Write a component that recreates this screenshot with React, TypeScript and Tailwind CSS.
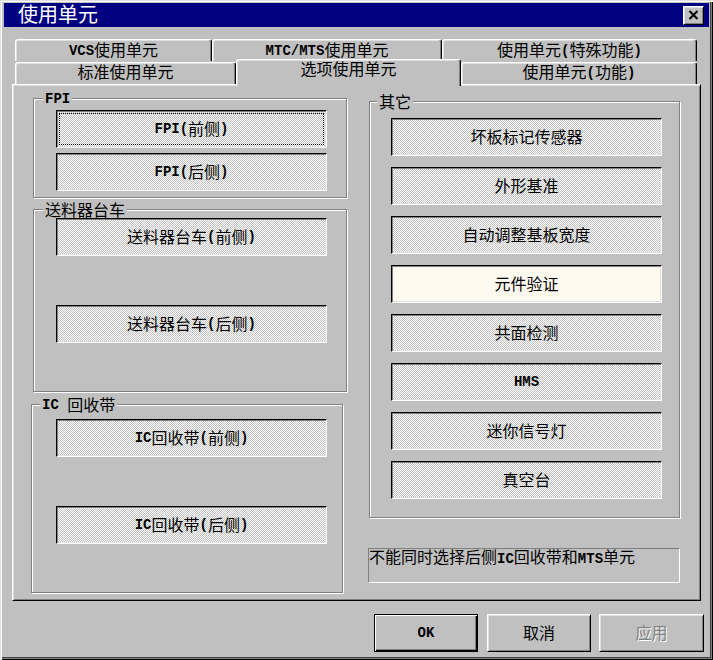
import React from "react";

const cjk = "font-['Liberation_Sans','Noto_Sans_CJK_SC',sans-serif]";

// ASCII runs get the narrow mono face, the rest stays CJK
function Label({ text }: { text: string }) {
  const parts = text.split(/([\x20-\x7e]+)/).filter(Boolean);
  return (
    <>
      {parts.map((p, i) =>
        /^[\x20-\x7e]+$/.test(p) ? (
          <span
            key={i}
            className="inline-block font-['Liberation_Mono',monospace] text-[14px] leading-[16px] font-bold whitespace-pre"
          >
            {p}
          </span>
        ) : (
          <span key={i} className="inline-block leading-[17px]">
            {p}
          </span>
        )
      )}
    </>
  );
}

function ToggleButton({
  text,
  focused,
  cream,
  className,
}: {
  text: string;
  focused?: boolean;
  cream?: boolean;
  className?: string;
}) {
  return (
    <div
      className={
        "flex h-[38px] w-[271px] items-center justify-center border border-t-black border-l-black border-r-white border-b-white shadow-[inset_1px_1px_#808080,inset_-1px_-1px_#dfdfdf] text-[16px] leading-[18px] text-black " +
        (cream
          ? "bg-[#fffaf0] "
          : "bg-[repeating-conic-gradient(#c0c0c0_0_25%,#ffffff_0_50%)] bg-[length:2px_2px] ") +
        (focused ? "outline-1 outline-dotted outline-black -outline-offset-[4px] " : "") +
        (className ?? "")
      }
    >
      <Label text={text} />
    </div>
  );
}

function Group({
  title,
  className,
  labelClass,
  children,
}: {
  title: string;
  className?: string;
  labelClass?: string;
  children: React.ReactNode;
}) {
  return (
    <div
      className={
        "border border-[#808080] shadow-[inset_1px_1px_#ffffff,1px_1px_#ffffff] " +
        (className ?? "")
      }
    >
      <div
        className={
          "-mt-[8px] flex h-[16px] w-fit items-center bg-[#c0c0c0] px-[2px] text-[16px] leading-[16px] text-black " +
          (labelClass ?? "ml-[9px]")
        }
      >
        <Label text={title} />
      </div>
      {children}
    </div>
  );
}

function BackTab({ text, w }: { text: string; w: string }) {
  return (
    <div
      className={
        "flex h-[22px] items-center justify-center rounded-t-[3px] border-t border-l border-r border-t-white border-l-white border-r-black shadow-[inset_-1px_0_#808080,inset_1px_1px_#dfdfdf] text-[16px] leading-[18px] text-black " +
        w
      }
    >
      <Label text={text} />
    </div>
  );
}

function PushButton({
  text,
  isDefault,
  disabled,
  className,
}: {
  text: string;
  isDefault?: boolean;
  disabled?: boolean;
  className?: string;
}) {
  return (
    <div
      className={
        "flex h-[38px] items-center justify-center bg-[#c0c0c0] text-[16px] leading-[18px] " +
        (isDefault
          ? "border border-black shadow-[inset_1px_1px_#ffffff,inset_-1px_-1px_#000000,inset_-2px_-2px_#808080] "
          : "border border-t-white border-l-white border-r-black border-b-black shadow-[inset_1px_1px_#dfdfdf,inset_-1px_-1px_#808080] ") +
        (disabled ? "text-[#808080] [text-shadow:1px_1px_#ffffff] " : "text-black ") +
        (className ?? "")
      }
    >
      <Label text={text} />
    </div>
  );
}

export default function App() {
  return (
    <div
      className={
        "flex h-[660px] w-[713px] flex-col bg-[#c0c0c0] px-[4px] pt-[3px] shadow-[inset_1px_1px_#dfdfdf,inset_2px_2px_#ffffff,inset_-1px_-1px_#000000,inset_-2px_-2px_#808080,inset_-3px_-3px_#404040] " +
        cjk
      }
    >
      {/* title bar */}
      <div className="flex h-[24px] items-center justify-between bg-[#000080] pl-[14px] pr-[5px]">
        <span className="inline-block text-[20px] leading-[22px] text-white">使用单元</span>
        <div className="flex h-[19px] w-[21px] items-center justify-center border border-t-white border-l-white border-r-black border-b-black bg-[#c0c0c0] shadow-[inset_1px_1px_#dfdfdf,inset_-1px_-1px_#808080]">
          <svg width="11" height="10" viewBox="0 0 11 10">
            <path d="M1.5 1 L9.5 9 M9.5 1 L1.5 9" stroke="#000" strokeWidth="2" />
          </svg>
        </div>
      </div>

      {/* tabs */}
      <div className="mt-[12px] ml-[11px] flex flex-col">
        <div className="flex h-[22px]">
          <BackTab text="VCS使用单元" w="w-[197px]" />
          <BackTab text="MTC/MTS使用单元" w="w-[230px]" />
          <BackTab text="使用单元(特殊功能)" w="w-[255px]" />
        </div>
        <div className="flex h-[23px] items-end">
          <div className="flex h-[22px] w-[221px] items-center justify-center border-t border-l border-r border-t-white border-l-white border-r-black shadow-[inset_-1px_0_#808080,inset_1px_1px_#dfdfdf] rounded-t-[3px] pb-[2px] text-[16px] leading-[18px] text-black">
            <Label text="标准使用单元" />
          </div>
          <div className="relative z-10 -mb-[2px] flex h-[27px] w-[225px] items-start justify-center rounded-t-[3px] border-t border-l border-r border-t-white border-l-white border-r-black bg-[#c0c0c0] pt-[1px] shadow-[inset_-1px_0_#808080,inset_1px_1px_#dfdfdf] text-[16px] leading-[18px] text-black">
            <Label text="选项使用单元" />
          </div>
          <div className="flex h-[22px] w-[236px] items-center justify-center border-t border-l border-r border-t-white border-l-white border-r-black shadow-[inset_-1px_0_#808080,inset_1px_1px_#dfdfdf] rounded-t-[3px] pb-[2px] text-[16px] leading-[18px] text-black">
            <Label text="使用单元(功能)" />
          </div>
        </div>
      </div>

      {/* tab page */}
      <div className="ml-[8px] flex h-[517px] w-[689px] border border-t-white border-l-white border-r-black border-b-black shadow-[inset_1px_1px_#dfdfdf,inset_-1px_-1px_#808080]">
        <div className="ml-[20px] mt-[13px] flex w-[314px] flex-col">
          <Group title="FPI" className="h-[100px]">
            <ToggleButton text="FPI(前侧)" focused className="ml-[22px] mt-[3px]" />
            <ToggleButton text="FPI(后侧)" className="ml-[22px] mt-[5px]" />
          </Group>
          <Group title="送料器台车" className="mt-[11px] h-[183px]">
            <ToggleButton text="送料器台车(前侧)" className="ml-[22px]" />
            <ToggleButton text="送料器台车(后侧)" className="ml-[22px] mt-[49px]" />
          </Group>
          <Group
            title="IC 回收带"
            labelClass="ml-[8px]"
            className="-ml-[2px] mt-[12px] h-[189px] w-[312px]"
          >
            <ToggleButton text="IC回收带(前侧)" className="ml-[24px] mt-[6px]" />
            <ToggleButton text="IC回收带(后侧)" className="ml-[24px] mt-[49px]" />
          </Group>
        </div>

        <div className="ml-[22px] mt-[16px] flex w-[311px] flex-col">
          <Group title="其它" labelClass="ml-[7px]" className="h-[417px]">
            <div className="ml-[21px] mt-[8px] flex flex-col gap-[11px]">
              <ToggleButton text="坏板标记传感器" />
              <ToggleButton text="外形基准" />
              <ToggleButton text="自动调整基板宽度" />
              <ToggleButton text="元件验证" cream />
              <ToggleButton text="共面检测" />
              <ToggleButton text="HMS" />
              <ToggleButton text="迷你信号灯" />
              <ToggleButton text="真空台" />
            </div>
          </Group>
          <div className="-ml-[1px] mt-[30px] h-[35px] w-[312px] border border-t-[#808080] border-l-[#808080] border-r-white border-b-white text-[16px] leading-[16px] text-black">
            <Label text="不能同时选择后侧IC回收带和MTS单元" />
          </div>
        </div>
      </div>

      {/* dialog buttons */}
      <div className="mt-[13px] flex">
        <PushButton text="OK" isDefault className="ml-[370px] w-[104px]" />
        <PushButton text="取消" className="ml-[9px] w-[104px]" />
        <PushButton text="应用" disabled className="ml-[8px] w-[105px]" />
      </div>
    </div>
  );
}
